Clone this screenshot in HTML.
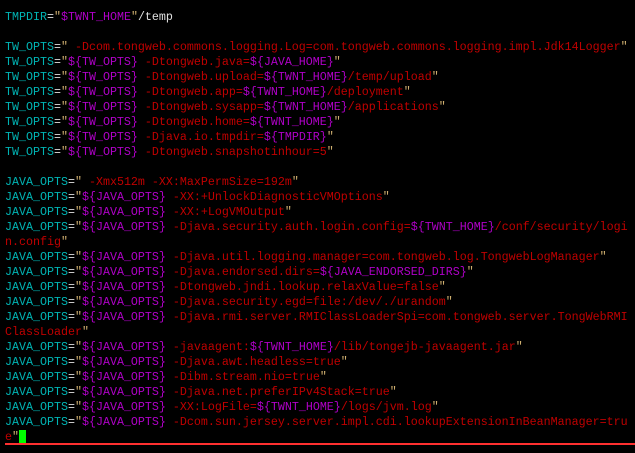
<!DOCTYPE html><html><head><style>
body{margin:0;background:#000;width:635px;height:453px;overflow:hidden;position:relative}
pre{margin:0;position:absolute;left:5px;top:10px;font:11.67px/15px "Liberation Mono",monospace;color:#c00000;letter-spacing:0}
.c{color:#00b4b4}.w{color:#e0e0e0}.q{color:#d0b070}.m{color:#b000c8}.r{color:#c80000}
.cur{background:#00ff00;color:#00ff00}
#bar{position:absolute;left:5px;top:443px;width:630px;height:2px;background:#ff3030}
</style></head><body><pre><span class="c">TMPDIR</span><span class="w">=</span><span class="q">"</span><span class="m">$TWNT_HOME</span><span class="q">"</span><span class="w">/temp</span>

<span class="c">TW_OPTS</span><span class="w">=</span><span class="q">"</span> -Dcom.tongweb.commons.logging.Log=com.tongweb.commons.logging.impl.Jdk14Logger<span class="q">"</span>
<span class="c">TW_OPTS</span><span class="w">=</span><span class="q">"</span><span class="m">${TW_OPTS}</span> -Dtongweb.java=<span class="m">${JAVA_HOME}</span><span class="q">"</span>
<span class="c">TW_OPTS</span><span class="w">=</span><span class="q">"</span><span class="m">${TW_OPTS}</span> -Dtongweb.upload=<span class="m">${TWNT_HOME}</span>/temp/upload<span class="q">"</span>
<span class="c">TW_OPTS</span><span class="w">=</span><span class="q">"</span><span class="m">${TW_OPTS}</span> -Dtongweb.app=<span class="m">${TWNT_HOME}</span>/deployment<span class="q">"</span>
<span class="c">TW_OPTS</span><span class="w">=</span><span class="q">"</span><span class="m">${TW_OPTS}</span> -Dtongweb.sysapp=<span class="m">${TWNT_HOME}</span>/applications<span class="q">"</span>
<span class="c">TW_OPTS</span><span class="w">=</span><span class="q">"</span><span class="m">${TW_OPTS}</span> -Dtongweb.home=<span class="m">${TWNT_HOME}</span><span class="q">"</span>
<span class="c">TW_OPTS</span><span class="w">=</span><span class="q">"</span><span class="m">${TW_OPTS}</span> -Djava.io.tmpdir=<span class="m">${TMPDIR}</span><span class="q">"</span>
<span class="c">TW_OPTS</span><span class="w">=</span><span class="q">"</span><span class="m">${TW_OPTS}</span> -Dtongweb.snapshotinhour=5<span class="q">"</span>

<span class="c">JAVA_OPTS</span><span class="w">=</span><span class="q">"</span> -Xmx512m -XX:MaxPermSize=192m<span class="q">"</span>
<span class="c">JAVA_OPTS</span><span class="w">=</span><span class="q">"</span><span class="m">${JAVA_OPTS}</span> -XX:+UnlockDiagnosticVMOptions<span class="q">"</span>
<span class="c">JAVA_OPTS</span><span class="w">=</span><span class="q">"</span><span class="m">${JAVA_OPTS}</span> -XX:+LogVMOutput<span class="q">"</span>
<span class="c">JAVA_OPTS</span><span class="w">=</span><span class="q">"</span><span class="m">${JAVA_OPTS}</span> -Djava.security.auth.login.config=<span class="m">${TWNT_HOME}</span>/conf/security/logi
n.config<span class="q">"</span>
<span class="c">JAVA_OPTS</span><span class="w">=</span><span class="q">"</span><span class="m">${JAVA_OPTS}</span> -Djava.util.logging.manager=com.tongweb.log.TongwebLogManager<span class="q">"</span>
<span class="c">JAVA_OPTS</span><span class="w">=</span><span class="q">"</span><span class="m">${JAVA_OPTS}</span> -Djava.endorsed.dirs=<span class="m">${JAVA_ENDORSED_DIRS}</span><span class="q">"</span>
<span class="c">JAVA_OPTS</span><span class="w">=</span><span class="q">"</span><span class="m">${JAVA_OPTS}</span> -Dtongweb.jndi.lookup.relaxValue=false<span class="q">"</span>
<span class="c">JAVA_OPTS</span><span class="w">=</span><span class="q">"</span><span class="m">${JAVA_OPTS}</span> -Djava.security.egd=file:/dev/./urandom<span class="q">"</span>
<span class="c">JAVA_OPTS</span><span class="w">=</span><span class="q">"</span><span class="m">${JAVA_OPTS}</span> -Djava.rmi.server.RMIClassLoaderSpi=com.tongweb.server.TongWebRMI
ClassLoader<span class="q">"</span>
<span class="c">JAVA_OPTS</span><span class="w">=</span><span class="q">"</span><span class="m">${JAVA_OPTS}</span> -javaagent:<span class="m">${TWNT_HOME}</span>/lib/tongejb-javaagent.jar<span class="q">"</span>
<span class="c">JAVA_OPTS</span><span class="w">=</span><span class="q">"</span><span class="m">${JAVA_OPTS}</span> -Djava.awt.headless=true<span class="q">"</span>
<span class="c">JAVA_OPTS</span><span class="w">=</span><span class="q">"</span><span class="m">${JAVA_OPTS}</span> -Dibm.stream.nio=true<span class="q">"</span>
<span class="c">JAVA_OPTS</span><span class="w">=</span><span class="q">"</span><span class="m">${JAVA_OPTS}</span> -Djava.net.preferIPv4Stack=true<span class="q">"</span>
<span class="c">JAVA_OPTS</span><span class="w">=</span><span class="q">"</span><span class="m">${JAVA_OPTS}</span> -XX:LogFile=<span class="m">${TWNT_HOME}</span>/logs/jvm.log<span class="q">"</span>
<span class="c">JAVA_OPTS</span><span class="w">=</span><span class="q">"</span><span class="m">${JAVA_OPTS}</span> -Dcom.sun.jersey.server.impl.cdi.lookupExtensionInBeanManager=tru
e<span class="q">"</span><span class="cur">█</span></pre><div id="bar"></div></body></html>
